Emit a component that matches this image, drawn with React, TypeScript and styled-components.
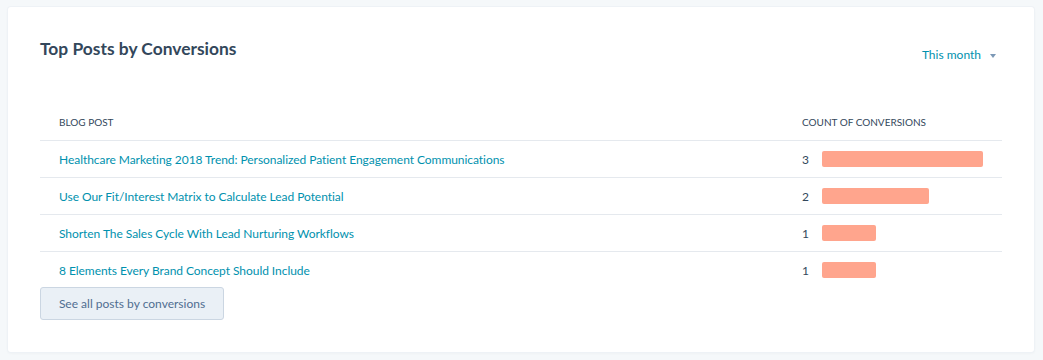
import React from "react";
import styled, { createGlobalStyle } from "styled-components";

const Global = createGlobalStyle`
  html, body { margin: 0; padding: 0; background: #f5f8fa; }
  body { font-family: Lato, "Open Sans", sans-serif; -webkit-font-smoothing: antialiased; }
`;

const Page = styled.div`
  padding: 7px 9px 8px 8px;
`;

const Card = styled.section`
  background: #fff;
  border-radius: 3px;
  box-shadow: 0 0 0 1px #eef2f6, 0 1px 3px rgba(45, 62, 80, 0.06);
  padding: 32px 32px 32px 32px;
`;

const Header = styled.div`
  display: flex;
  justify-content: space-between;
  align-items: flex-start;
  height: 65px;
`;

const Title = styled.h2`
  margin: 0;
  font-size: 17.4px;
  line-height: 20px;
  font-weight: 700;
  color: #33475b;
`;

const Dropdown = styled.button`
  display: flex;
  align-items: center;
  gap: 9px;
  margin-top: 7px;
  padding: 0 6px 0 0;
  border: 0;
  background: none;
  font-family: inherit;
  font-size: 12px;
  line-height: 18px;
  color: #0091ae;
  cursor: pointer;
`;

const Caret = styled.span`
  width: 0;
  height: 0;
  border-left: 3.5px solid transparent;
  border-right: 3.5px solid transparent;
  border-top: 4px solid #7c98b6;
  margin-top: 1px;
`;

const Table = styled.div`
  display: flex;
  flex-direction: column;
`;

const Row = styled.div<{ $last?: boolean }>`
  display: grid;
  grid-template-columns: 1fr 200px;
  align-items: center;
  height: 36px;
  border-bottom: ${(p) => (p.$last ? "none" : "1px solid #e5e9ee")};
  padding-left: 19px;
`;

const HeadCell = styled.div`
  font-size: 10px;
  font-weight: 400;
  text-transform: uppercase;
  color: #33475b;
`;

const Link = styled.a`
  font-size: 12px;
  letter-spacing: -0.05px;
  color: #0091ae;
  text-decoration: none;
`;

const CountCell = styled.div`
  display: flex;
  align-items: center;
`;

const Num = styled.span`
  width: 20px;
  font-size: 12px;
  color: #33475b;
`;

const Bar = styled.div`
  height: 16px;
  background: #ffa58d;
  border-radius: 2px;
`;

const Button = styled.button`
  align-self: flex-start;
  width: 184px;
  height: 33px;
  margin-top: -1px;
  background: #eaf0f6;
  border: 1px solid #cbd6e2;
  border-radius: 3px;
  font-family: inherit;
  font-size: 12px;
  color: #506e91;
  cursor: pointer;
`;

const posts = [
  { title: "Healthcare Marketing 2018 Trend: Personalized Patient Engagement Communications", count: 3 },
  { title: "Use Our Fit/Interest Matrix to Calculate Lead Potential", count: 2 },
  { title: "Shorten The Sales Cycle With Lead Nurturing Workflows", count: 1 },
  { title: "8 Elements Every Brand Concept Should Include", count: 1 },
];

export default function App() {
  const max = 3;
  return (
    <>
      <Global />
      <Page>
        <Card>
          <Header>
            <Title>Top Posts by Conversions</Title>
            <Dropdown>
              This month <Caret />
            </Dropdown>
          </Header>
          <Table>
            <Row>
              <HeadCell>Blog Post</HeadCell>
              <HeadCell>Count of Conversions</HeadCell>
            </Row>
            {posts.map((p, i) => (
              <Row key={i} $last={i === posts.length - 1}>
                <Link href="#">{p.title}</Link>
                <CountCell>
                  <Num>{p.count}</Num>
                  <Bar style={{ width: Math.round((p.count / max) * 161) }} />
                </CountCell>
              </Row>
            ))}
            <Button>See all posts by conversions</Button>
          </Table>
        </Card>
      </Page>
    </>
  );
}
